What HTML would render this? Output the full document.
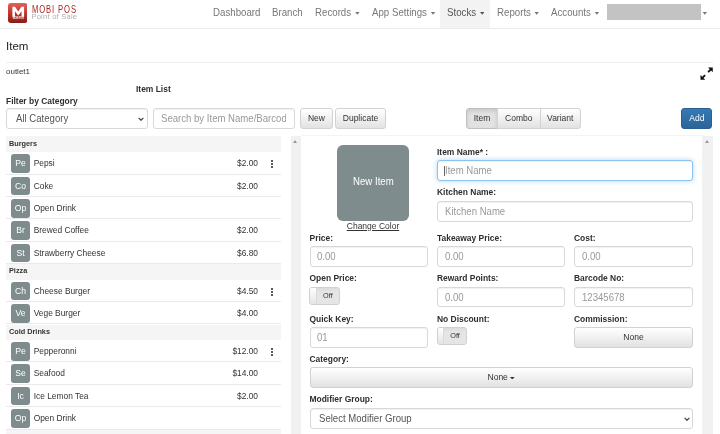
<!DOCTYPE html>
<html><head><meta charset="utf-8">
<style>
*{box-sizing:border-box;margin:0;padding:0}
html,body{width:720px;height:434px;overflow:hidden;background:#fff}
body{font-family:"Liberation Sans",Arial,sans-serif;font-size:10px;color:#333;position:relative}
.abs{position:absolute;white-space:nowrap}
.nav{position:absolute;top:0;left:0;width:720px;height:29px;border-bottom:1px solid #ececec;background:#fff}
.nav a{position:absolute;top:0;height:28px;line-height:25.6px;font-size:10.9px;color:#777;white-space:nowrap;transform:scaleX(.89);transform-origin:0 0}
.caret{display:inline-block;width:0;height:0;border-left:2.8px solid transparent;border-right:2.8px solid transparent;border-top:2.8px solid currentColor;vertical-align:middle;margin-left:4px}
.lbl{position:absolute;font-weight:bold;font-size:8.45px;color:#2e2e2e;white-space:nowrap;line-height:10px}
.inp{position:absolute;height:20.5px;border:1px solid #d8d8d8;border-radius:3px;background:#fff;font-size:9.6px;color:#999;line-height:19.5px;padding-left:6.7px;white-space:nowrap;overflow:hidden;box-shadow:inset 0 1px 1px rgba(0,0,0,.06)}
.btn{position:absolute;height:20.5px;border:1px solid #d2d2d2;border-radius:3px;background:linear-gradient(#fff,#e2e2e2);font-size:8.5px;color:#333;line-height:19.5px;text-align:center;white-space:nowrap}
.cat{position:absolute;left:6px;width:275px;height:15.5px;background:#f5f5f5;font-size:7.3px;font-weight:bold;color:#333;line-height:14.8px;padding-left:3px}
.row{position:absolute;left:6px;width:275px;height:22.4px;border-bottom:1px solid #eaeaea;font-size:8.4px;color:#333;line-height:23px}
.row .ic{position:absolute;left:5px;top:2px;width:19px;height:18.7px;border-radius:3px;background:#7f8c8d;color:#fff;text-align:center;line-height:19.8px;font-size:8.6px}
.row .nm{position:absolute;left:27.7px;top:0}
.row .pr{position:absolute;right:23px;top:0}
.row .dots{position:absolute;left:264.5px;top:8px;width:2.2px;height:2.2px;background:#222;border-radius:50%;box-shadow:0 3px 0 #222,0 6px 0 #222}

.tog{position:absolute;width:30.3px;height:18px;border:1px solid #d0d0d0;border-radius:3px;background:#e4e4e4;overflow:hidden}
.tog i{position:absolute;left:0;top:0;width:6.5px;height:16px;background:linear-gradient(#fff,#e4e4e4);border-right:1px solid #dadada}
.tog b{position:absolute;left:6.5px;top:0;width:22px;height:16px;background:linear-gradient(#dcdcdc,#e5e5e5 25%,#e5e5e5);font-weight:normal;font-size:7.3px;color:#333;text-align:center;line-height:16.5px}
.inp .t{display:inline-block;font-size:10.9px;transform:scaleX(.88);transform-origin:0 50%}
.cr{display:inline-block;vertical-align:middle;margin-left:4px;margin-top:1px}
</style></head><body><div id="wrap" style="position:absolute;left:0;top:0;width:720px;height:434px;will-change:transform">
<div class="nav">
  <a style="left:213px">Dashboard</a>
  <a style="left:272px">Branch</a>
  <a style="left:315px">Records<svg class="cr" width="5.2" height="2.8" viewBox="0 0 5 2.8"><path d="M0 0h5L2.5 2.8z" fill="currentColor"/></svg></a>
  <a style="left:371.5px">App Settings<svg class="cr" width="5.2" height="2.8" viewBox="0 0 5 2.8"><path d="M0 0h5L2.5 2.8z" fill="currentColor"/></svg></a>
  <div class="abs" style="left:440px;top:0;width:50px;height:28px;background:#f3f3f3"></div>
  <a style="left:447px;color:#555">Stocks<svg class="cr" width="5.2" height="2.8" viewBox="0 0 5 2.8"><path d="M0 0h5L2.5 2.8z" fill="currentColor"/></svg></a>
  <a style="left:496.5px">Reports<svg class="cr" width="5.2" height="2.8" viewBox="0 0 5 2.8"><path d="M0 0h5L2.5 2.8z" fill="currentColor"/></svg></a>
  <a style="left:551px">Accounts<svg class="cr" width="5.2" height="2.8" viewBox="0 0 5 2.8"><path d="M0 0h5L2.5 2.8z" fill="currentColor"/></svg></a>
  <div class="abs" style="left:606.5px;top:3.5px;width:94px;height:16px;background:#c3c3c3"></div>
  <a style="left:698.5px"><svg class="cr" width="5.2" height="2.8" viewBox="0 0 5 2.8"><path d="M0 0h5L2.5 2.8z" fill="currentColor"/></svg></a>
</div>

<!-- logo -->
<svg class="abs" style="left:7.75px;top:2.5px" width="19.5" height="20" viewBox="0 0 20 20" preserveAspectRatio="none">
  <defs><linearGradient id="lg" x1="0" y1="0" x2="0" y2="1"><stop offset="0" stop-color="#e2625a"/><stop offset=".45" stop-color="#c53a34"/><stop offset="1" stop-color="#8a1a17"/></linearGradient></defs>
  <rect x="0" y="0" width="20" height="20" rx="3" fill="url(#lg)"/>
  <path d="M4.5 13.7V3.8h2.7l3.3 4.6 3.3-4.6h2.7v9.9h-2.6V8.2l-3.4 4.2-3.4-4.2v5.500z" fill="#fff"/>
  <text x="10.5" y="16.3" font-size="2.6" font-weight="bold" fill="#fff" text-anchor="middle" font-family="Liberation Sans, sans-serif" textLength="11.5" lengthAdjust="spacingAndGlyphs">MOBI POS</text>
</svg>
<div class="abs" style="left:31.6px;top:4.4px;font-size:10px;line-height:12px;color:#a52825;letter-spacing:1.15px;transform:scale(.765,1.03);transform-origin:0 0">MOBI POS</div>
<div class="abs" style="left:31.4px;top:12.2px;font-size:7.6px;line-height:10px;color:#b0b0b0;letter-spacing:.22px">Point of Sale</div>

<div class="abs" style="left:6px;top:39px;font-size:11.5px;line-height:14px;color:#222">Item</div>
<div class="abs" style="left:6px;top:62px;width:707px;height:1px;background:#eee"></div>
<div class="abs" style="left:6px;top:66.7px;font-size:8px;line-height:10px;color:#333">outlet1</div>
<!-- expand icon -->
<svg class="abs" style="left:699.5px;top:67px" width="13.25" height="13.25" viewBox="0 0 14 14">
  <path d="M13.5 .5v5l-1.8-1.8-2.4 2.4-1.4-1.4 2.4-2.4L8.5 .5zM.5 13.5v-5l1.8 1.8 2.4-2.4 1.4 1.4-2.4 2.4 1.8 1.8z" fill="#111"/>
</svg>
<div class="lbl" style="left:136px;top:84px">Item List</div>
<div class="lbl" style="left:6px;top:96px">Filter by Category</div>

<div class="inp" style="left:6px;top:108px;width:141.5px;color:#555;padding-left:8.5px"><span class="t">All Category</span>
  <svg class="abs" style="right:2.5px;top:7.5px" width="6" height="4.5" viewBox="0 0 7 5"><path d="M.7 .9L3.5 3.7 6.3 .9" stroke="#444" stroke-width="1.4" fill="none"/></svg>
</div>
<div class="inp" style="left:153px;top:108px;width:141.5px"><span style="display:block;overflow:hidden;margin-right:7.3px"><span class="t">Search by Item Name/Barcode</span></span></div>
<div class="btn" style="left:300px;top:108px;width:33px">New</div>
<div class="btn" style="left:335px;top:108px;width:51px">Duplicate</div>
<div class="btn" style="left:466px;top:108px;width:32px;border-radius:3px 0 0 3px;background:#e2e2e2;border-color:#c0c0c0;box-shadow:inset 0 2px 4px rgba(0,0,0,.12)">Item</div>
<div class="btn" style="left:497px;top:108px;width:43.5px;border-radius:0">Combo</div>
<div class="btn" style="left:539.5px;top:108px;width:41.5px;border-radius:0 3px 3px 0">Variant</div>
<div class="btn" style="left:681.4px;top:108px;width:31px;color:#fff;background:linear-gradient(#3679b5,#2b6599);border-color:#2a5f90">Add</div>
<div class="cat" style="top:136.7px">Burgers</div>
<div class="row" style="top:152.2px"><span class="ic">Pe</span><span class="nm">Pepsi</span><span class="pr">$2.00</span><span class="dots"></span></div>
<div class="row" style="top:174.6px"><span class="ic">Co</span><span class="nm">Coke</span><span class="pr">$2.00</span></div>
<div class="row" style="top:197.0px"><span class="ic">Op</span><span class="nm">Open Drink</span><span class="pr"></span></div>
<div class="row" style="top:219.4px"><span class="ic">Br</span><span class="nm">Brewed Coffee</span><span class="pr">$2.00</span></div>
<div class="row" style="top:241.8px"><span class="ic">St</span><span class="nm">Strawberry Cheese</span><span class="pr">$6.80</span></div>
<div class="cat" style="top:264.2px">Pizza</div>
<div class="row" style="top:279.7px"><span class="ic">Ch</span><span class="nm">Cheese Burger</span><span class="pr">$4.50</span><span class="dots"></span></div>
<div class="row" style="top:302.1px"><span class="ic">Ve</span><span class="nm">Vege Burger</span><span class="pr">$4.00</span></div>
<div class="cat" style="top:324.5px">Cold Drinks</div>
<div class="row" style="top:340.0px"><span class="ic">Pe</span><span class="nm">Pepperonni</span><span class="pr">$12.00</span><span class="dots"></span></div>
<div class="row" style="top:362.4px"><span class="ic">Se</span><span class="nm">Seafood</span><span class="pr">$14.00</span></div>
<div class="row" style="top:384.8px"><span class="ic">Ic</span><span class="nm">Ice Lemon Tea</span><span class="pr">$2.00</span></div>
<div class="row" style="top:407.2px"><span class="ic">Op</span><span class="nm">Open Drink</span><span class="pr"></span></div>
<div class="cat" style="top:430.0px"></div>

<div class="abs" style="left:6px;top:136px;width:275px;height:3px;background:#f5f5f5"></div>
<div class="abs" style="left:301px;top:135px;width:402px;height:1px;background:#f4f4f4"></div>
<!-- scrollbars -->
<div class="abs" style="left:290.5px;top:136px;width:10.5px;height:298px;background:#f1f1f1"></div>
<div class="abs" style="left:293.2px;top:140.3px;border-left:2.5px solid transparent;border-right:2.5px solid transparent;border-bottom:3px solid #999"></div>
<div class="abs" style="left:702px;top:136px;width:11px;height:298px;background:#f1f1f1"></div>
<div class="abs" style="left:705px;top:140.3px;border-left:2.5px solid transparent;border-right:2.5px solid transparent;border-bottom:3px solid #999"></div>

<div class="abs" style="left:337px;top:145.3px;width:72px;height:75.7px;border-radius:6px;background:#7f8c8d;color:#fff;font-size:10.6px;text-align:center;line-height:72.5px"><span style="display:inline-block;transform:scaleX(.91)">New Item</span></div>
<div class="abs" style="left:337px;top:220.6px;width:72px;text-align:center;font-size:8.5px;line-height:10px;color:#333;text-decoration:underline">Change Color</div>

<div class="lbl" style="left:437px;top:147px">Item Name* :</div>
<div class="inp" style="left:437px;top:160.4px;width:256px;border-color:#8cc2ee;box-shadow:inset 0 1px 1px rgba(0,0,0,.06),0 0 5px rgba(102,175,233,.5)"><span class="t">Item Name</span></div>
<div class="abs" id="cur" style="left:444.3px;top:165.5px;width:1px;height:10.5px;background:#666"></div>
<div class="lbl" style="left:437px;top:187px">Kitchen Name:</div>
<div class="inp" style="left:437px;top:201px;width:256px"><span class="t">Kitchen Name</span></div>

<div class="lbl" style="left:309.5px;top:233px">Price:</div>
<div class="lbl" style="left:437px;top:233px">Takeaway Price:</div>
<div class="lbl" style="left:574px;top:233px">Cost:</div>
<div class="inp" style="left:309.5px;top:246px;width:118.5px"><span class="t">0.00</span></div>
<div class="inp" style="left:437px;top:246px;width:128px"><span class="t">0.00</span></div>
<div class="inp" style="left:574px;top:246px;width:119px"><span class="t">0.00</span></div>

<div class="lbl" style="left:309.5px;top:273px">Open Price:</div>
<div class="lbl" style="left:437px;top:273px">Reward Points:</div>
<div class="lbl" style="left:574px;top:273px">Barcode No:</div>
<div class="tog" style="left:309.4px;top:286.8px"><i></i><b>Off</b></div>
<div class="inp" style="left:437px;top:286.6px;width:128px"><span class="t">0.00</span></div>
<div class="inp" style="left:574px;top:286.6px;width:119px"><span class="t">12345678</span></div>

<div class="lbl" style="left:309.5px;top:314px">Quick Key:</div>
<div class="lbl" style="left:437px;top:314px">No Discount:</div>
<div class="lbl" style="left:574px;top:314px">Commission:</div>
<div class="inp" style="left:309.5px;top:327px;width:118.5px"><span class="t">01</span></div>
<div class="tog" style="left:436.6px;top:326.8px"><i></i><b>Off</b></div>
<div class="btn" style="left:574px;top:327px;width:119px">None</div>

<div class="lbl" style="left:309.5px;top:354px">Category:</div>
<div class="btn" style="left:309.5px;top:367.4px;width:383.5px;height:20.4px;line-height:19px">None<svg class="cr" style="margin-left:2.5px;margin-top:0" width="4.6" height="2.6" viewBox="0 0 5 2.8"><path d="M0 0h5L2.5 2.8z" fill="currentColor"/></svg></div>
<div class="lbl" style="left:309.5px;top:394px">Modifier Group:</div>
<div class="inp" style="left:309.5px;top:408px;width:383.5px;color:#555;padding-left:8.5px"><span class="t">Select Modifier Group</span>
  <svg class="abs" style="right:2.5px;top:7.5px" width="6" height="4.5" viewBox="0 0 7 5"><path d="M.7 .9L3.5 3.7 6.3 .9" stroke="#444" stroke-width="1.4" fill="none"/></svg>
</div>
</div></body></html>
